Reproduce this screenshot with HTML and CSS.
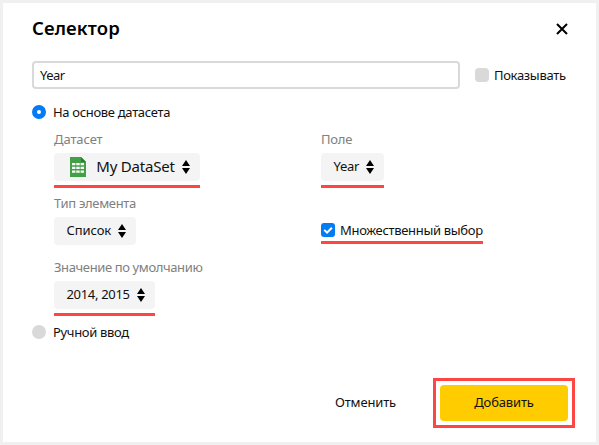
FILE: index.html
```html
<!DOCTYPE html>
<html lang="ru">
<head>
<meta charset="utf-8">
<title>Селектор</title>
<link rel="stylesheet" href="styles.css">
</head>
<body>
<main class="dialog">
  <header class="header">
    <h1 class="title">Селектор</h1>
    <svg class="close" viewBox="0 0 12 12"><path d="M1 1L11 11M11 1L1 11"/></svg>
  </header>
  <div class="name-row">
    <div class="input"><span class="t-input">Year</span></div>
    <div class="check"><i class="box"></i><span class="t-show">Показывать</span></div>
  </div>
  <div class="radio-row"><i class="radio radio-on"></i><span class="t-based">На основе датасета</span></div>
  <section class="fields">
    <div class="field">
      <div class="label"><span class="t-dataset">Датасет</span></div>
      <div class="select select-dataset marked">
        <svg class="sheet" viewBox="0 0 16 20"><path fill="#43a047" d="M0 0H11L16 5V20H0Z"/><path fill="#2e7d32" d="M11 0L16 5H11Z"/><path fill="#fff" d="M2 6h3.400v2.300H2zM6.300 6h3.400v2.300h-3.400zM10.600 6h3.400v2.300h-3.400zM2 9.700h3.400v2.300H2zM6.300 9.700h3.400v2.300h-3.400zM10.600 9.700h3.400v2.300h-3.400zM2 13.400h3.400v2.300H2zM6.300 13.400h3.400v2.300h-3.400zM10.600 13.400h3.400v2.300h-3.400z"/></svg>
        <span class="t-mydata">My DataSet</span>
        <svg class="arrows" viewBox="0 0 8 14"><path d="M4 0L8 6H0ZM0 8H8L4 14Z"/></svg>
      </div>
    </div>
    <div class="field">
      <div class="label"><span class="t-field">Поле</span></div>
      <div class="select select-year marked"><span class="t-year">Year</span><svg class="arrows" viewBox="0 0 8 14"><path d="M4 0L8 6H0ZM0 8H8L4 14Z"/></svg></div>
    </div>
    <div class="field">
      <div class="label"><span class="t-type">Тип элемента</span></div>
      <div class="select select-list"><span class="t-list">Список</span><svg class="arrows" viewBox="0 0 8 14"><path d="M4 0L8 6H0ZM0 8H8L4 14Z"/></svg></div>
    </div>
    <div class="multi check marked">
      <i class="box box-on"><svg viewBox="0 0 14 14"><path d="M3.200 6.900L6 9.600L10.900 4.700"/></svg></i><span class="t-multi">Множественный выбор</span>
    </div>
    <div class="field">
      <div class="label"><span class="t-default">Значение по умолчанию</span></div>
      <div class="select select-default marked"><span class="t-years">2014, 2015</span><svg class="arrows" viewBox="0 0 8 14"><path d="M4 0L8 6H0ZM0 8H8L4 14Z"/></svg></div>
    </div>
  </section>
  <div class="radio-row"><i class="radio"></i><span class="t-manual">Ручной ввод</span></div>
  <footer class="footer">
    <span class="cancel">Отменить</span>
    <div class="frame"><div class="submit"><span class="t-add">Добавить</span></div></div>
  </footer>
</main>
</body>
</html>
```

FILE: styles.css
```css
* { box-sizing: border-box; }
body {
  margin: 0;
  width: 599px;
  height: 445px;
  padding: 3px;
  background: #f0f0f0;
  font: 13px/20px "Noto Sans", sans-serif;
  letter-spacing: -0.32px;
  color: #111;
  white-space: nowrap;
  overflow: hidden;
}
.dialog { width: 593px; height: 439px; padding: 0 21px 0 29px; background: #fff; }
.header { display: flex; align-items: center; justify-content: space-between; height: 50px; padding-right: 7px; }
.title { margin: 0; font-size: 18.5px; line-height: 24px; font-weight: 600; letter-spacing: 0.12px; color: #000; }
.close { width: 12px; height: 12px; margin-top: 2px; fill: none; stroke: #000; stroke-width: 2; }
.name-row { display: flex; align-items: center; gap: 15px; margin-top: 8px; }
.input { display: flex; align-items: center; width: 428px; height: 28px; padding-left: 6px; border: 2px solid #d9d9d9; border-radius: 4px; }
.t-input { letter-spacing: -0.5px; }
.check { display: flex; align-items: center; gap: 5px; }
.box { flex: none; width: 14px; height: 14px; border-radius: 4px; background: #d9d9d9; }
.box-on { border-radius: 3px; background: #027bf3; }
.box svg { display: block; fill: none; stroke: #fff; stroke-width: 2; }
.radio-row { display: flex; align-items: center; gap: 7px; height: 20px; margin-top: 13px; }
.radio { flex: none; width: 14px; height: 14px; border-radius: 50%; background: #d9d9d9; }
.radio-on { border: 5px solid #027bf3; background: #fff; }
.fields { display: grid; grid-template-columns: 267px auto; row-gap: 13px; margin: 8px 0 0 22px; }
.label { height: 20px; margin-bottom: 3px; line-height: 18px; color: #808080; }
.t-dataset { letter-spacing: -0.1px; }
.t-field { letter-spacing: -0.2px; }
.t-default { letter-spacing: -0.38px; }
.select { display: flex; align-items: center; justify-content: space-between; height: 28px; padding: 0 10px 0 12.5px; border-radius: 4px; background: #f4f4f4; }
.select-dataset { width: 146px; padding-left: 16px; font-size: 15px; }
.t-mydata { margin: -2px 0 0 3px; letter-spacing: -0.2px; }
.select-year { width: 63px; }
.t-year { margin-top: -2px; letter-spacing: -0.3px; }
.select-list { width: 82px; }
.t-list { margin-top: -2px; letter-spacing: -0.1px; }
.select-default { width: 101px; }
.t-years { margin-top: -2px; }
.sheet { width: 16px; height: 20px; }
.arrows { width: 8px; height: 14px; }
.marked { position: relative; }
.marked::after { content: ""; position: absolute; left: 0; right: 0; bottom: -7px; height: 3px; background: #fe4642; }
.multi { width: 162px; height: 14px; margin-top: 29px; }
.footer { display: flex; align-items: center; justify-content: flex-end; gap: 37px; margin-top: 36px; }
.cancel, .t-add { margin-top: -2px; letter-spacing: -0.15px; }
.frame { padding: 4px; border: 3px solid #fe4642; }
.submit { display: flex; align-items: center; justify-content: center; width: 128px; height: 36px; border-radius: 4px; background: #fc0; }
```
